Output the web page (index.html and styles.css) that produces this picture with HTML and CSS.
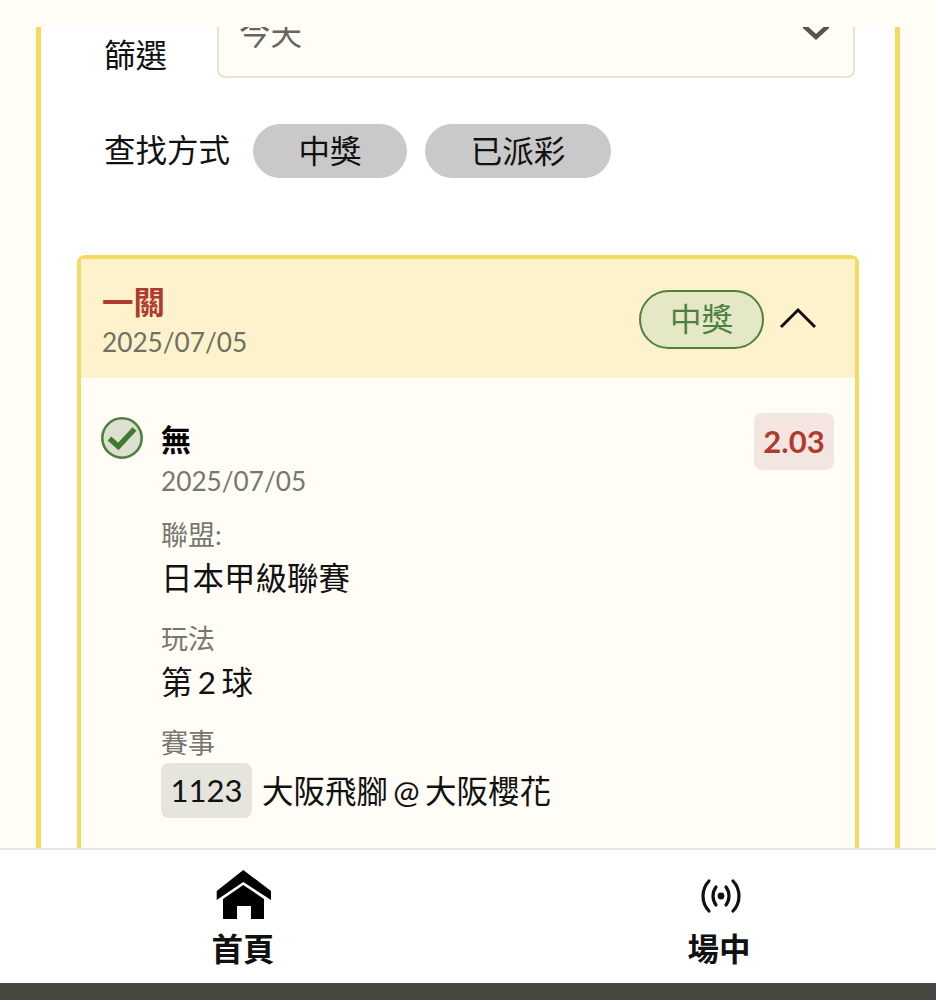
FILE: index.html
```html
<!DOCTYPE html>
<html lang="zh-Hant">

<head>
  <meta charset="UTF-8">
  <meta name="viewport" content="width=device-width, initial-scale=1.0">
  <title>注單</title>
  <link rel="stylesheet" href="styles.css">
</head>

<body>
  <div class="page">
    <div class="topbar"></div>

    <main class="main">
      <div class="panel">
        <div class="filter-row">
          <label class="filter-label">篩選</label>
          <div class="select">
            <span class="select-text">今天</span>
            <svg class="select-arrow" width="30" height="20" viewBox="0 0 30 20">
              <path d="M3 4 L15 15 L27 4" fill="none" stroke="#55554f" stroke-width="4.5"/>
            </svg>
          </div>
        </div>

        <div class="search-row">
          <span class="search-label">查找方式</span>
          <button type="button" class="chip chip-win">中獎</button>
          <button type="button" class="chip chip-paid">已派彩</button>
        </div>

        <section class="card">
          <header class="card-head">
            <div>
              <div class="card-title">一關</div>
              <div class="card-date">2025/07/05</div>
            </div>
            <div class="card-status">
              <span class="badge">中獎</span>
              <svg class="head-arrow" width="38" height="24" viewBox="0 0 38 24">
                <path d="M2 21 L19 4 L36 21" fill="none" stroke="#111" stroke-width="3"/>
              </svg>
            </div>
          </header>

          <div class="card-body">
            <svg class="check" width="42" height="42" viewBox="0 0 42 42">
              <circle cx="21" cy="21" r="19.7" fill="#dde0cf" stroke="#4f7f42" stroke-width="2.6"/>
              <path d="M8.5 21.5 L17.3 29.5 L33.5 12" fill="none" stroke="#3f7a30" stroke-width="5.5"/>
            </svg>

            <div class="detail">
              <div class="detail-name">無</div>
              <div class="detail-date">2025/07/05</div>

              <div class="field-label field-first">聯盟:</div>
              <div class="field-value">日本甲級聯賽</div>

              <div class="field-label">玩法</div>
              <div class="field-value">第 2 球</div>

              <div class="field-label">賽事</div>
              <div class="field-value match">
                <span class="match-no">1123</span>
                <span>大阪飛腳 @ 大阪櫻花</span>
              </div>
            </div>

            <div class="odds">2.03</div>
          </div>
        </section>
      </div>
    </main>

    <nav class="nav">
      <a class="nav-item">
        <svg class="nav-icon" width="58" height="52" viewBox="0 0 58 52">
          <path d="M29.3 2 L57 23 L57 32 L29.3 14 L2.7 32 L2.7 23 Z" fill="#000"/>
          <path d="M29.3 17 L50 31 L50 51 L37 51 L37 38 L23 38 L23 51 L9 51 L9 31 Z" fill="#000"/>
        </svg>
        <span class="nav-text">首頁</span>
      </a>
      <a class="nav-item">
        <svg class="nav-icon" width="58" height="52" viewBox="0 0 58 52">
          <circle cx="31" cy="28" r="3.4" fill="#111"/>
          <g fill="none" stroke="#111" stroke-width="3.2" stroke-linecap="round">
            <path d="M26 19 A15 15 0 0 0 26 37"/>
            <path d="M36 19 A15 15 0 0 1 36 37"/>
            <path d="M19 13 A21.8 21.8 0 0 0 19 43"/>
            <path d="M43 13 A21.8 21.8 0 0 1 43 43"/>
          </g>
        </svg>
        <span class="nav-text">場中</span>
      </a>
    </nav>

    <div class="home-strip"></div>
  </div>
</body>

</html>
```

FILE: styles.css
```css
* {
  box-sizing: border-box;
}

body {
  margin: 0;
  padding: 0;
  background-color: #fffdf5;
  font-family: Lato, "Noto Sans CJK TC", sans-serif;
  color: #111;
}

.page {
  display: flex;
  flex-direction: column;
  height: 1000px;
  overflow: hidden;
}

.topbar {
  height: 27px;
  flex: none;
  background-color: #fffdf5;
}

.main {
  flex: 1;
  min-height: 0;
  overflow: hidden;
  padding: 0 36px;
}

.panel {
  height: 100%;
  padding: 0 36px;
  background-color: #fff;
  border-left: 5px solid #f6d95f;
  border-right: 5px solid #f6d95f;
  overflow: hidden;
}

.filter-row {
  display: flex;
  margin-left: 27px;
  margin-right: 4px;
}

.filter-label {
  width: 113px;
  padding-top: 6px;
  font-size: 31.5px;
  line-height: 44px;
}

.select {
  flex: 1;
  height: 51px;
  display: flex;
  justify-content: space-between;
  padding: 0 22px 0 20px;
  background-color: #fffdf5;
  border: 2px solid #e6e4da;
  border-top: 0;
  border-radius: 0 0 8px 8px;
  overflow: hidden;
}

.select-text {
  margin-top: -16px;
  font-size: 31.5px;
  line-height: 44px;
  color: #66665f;
}

.select-arrow {
  margin-top: -5px;
}

.search-row {
  display: flex;
  align-items: center;
  margin: 46px 0 0 27px;
}

.search-label {
  width: 149px;
  padding-bottom: 2px;
  font-size: 31.5px;
  line-height: 52px;
}

.chip {
  height: 54px;
  margin-right: 18px;
  padding: 0 0 5px;
  border: 0;
  border-radius: 27px;
  background-color: #c9c9c9;
  font-family: inherit;
  font-size: 31.5px;
  color: #111;
}

.chip-win {
  width: 154px;
}

.chip-paid {
  width: 186px;
}

.card {
  min-height: 700px;
  margin-top: 77px;
  border: 4px solid #f6d95f;
  border-radius: 8px;
  background-color: #fffdf5;
}

.card-head {
  display: flex;
  justify-content: space-between;
  align-items: center;
  height: 119px;
  padding: 1px 21px 0;
  background-color: #fdf2cc;
}

.card-title {
  font-size: 31.5px;
  line-height: 44px;
  font-weight: 700;
  color: #b03a2e;
}

.card-date {
  margin-top: 1px;
  font-size: 26.2px;
  line-height: 34px;
  color: #6f6f64;
}

.card-status {
  display: flex;
  align-items: center;
  gap: 15px;
  margin: 1px 17px 0 0;
}

.head-arrow {
  margin-top: -4px;
}

.badge {
  width: 125px;
  height: 59px;
  border: 2px solid #4f7f42;
  border-radius: 30px;
  background-color: #e5e8c5;
  color: #4f7f42;
  font-size: 31.5px;
  line-height: 54px;
  text-align: center;
}

.card-body {
  display: flex;
  align-items: flex-start;
  padding: 35px 21px 0 20px;
}

.check {
  flex: none;
  margin-top: 4px;
}

.detail {
  flex: 1;
  margin-left: 18px;
}

.detail-name {
  margin-top: 6px;
  font-size: 30px;
  line-height: 40px;
  font-weight: 700;
  color: #000;
}

.detail-date {
  margin-top: 2px;
  font-size: 26.2px;
  line-height: 40px;
  color: #77776f;
}

.field-label {
  margin-top: 17px;
  font-size: 27px;
  line-height: 37px;
  color: #77776f;
}

.field-first {
  margin-top: 15px;
}

.field-value {
  font-size: 31.5px;
  line-height: 50px;
  word-spacing: -2.7px;
}

.match {
  display: flex;
  align-items: center;
  gap: 10px;
  margin-top: 2px;
}

.match-no {
  width: 91px;
  height: 55px;
  border-radius: 8px;
  background-color: #e5e4dd;
  font-size: 31px;
  line-height: 55px;
  text-align: center;
}

.odds {
  width: 80px;
  height: 57px;
  flex: none;
  border-radius: 8px;
  background-color: #f3e6e0;
  color: #b03a2e;
  font-size: 31px;
  font-weight: 700;
  line-height: 57px;
  text-align: center;
}

.nav {
  flex: none;
  height: 135px;
  display: flex;
  gap: 356px;
  padding-left: 183px;
  background-color: #fff;
  border-top: 2px solid #e6e6e3;
}

.nav-item {
  width: 120px;
  display: flex;
  flex-direction: column;
  align-items: center;
  padding-top: 18px;
}

.nav-icon {
  display: block;
}

.nav-text {
  margin-top: 7px;
  font-size: 31.5px;
  line-height: 44px;
  font-weight: 700;
  color: #111;
}

.home-strip {
  flex: none;
  height: 17px;
  background-color: #484741;
}
```
